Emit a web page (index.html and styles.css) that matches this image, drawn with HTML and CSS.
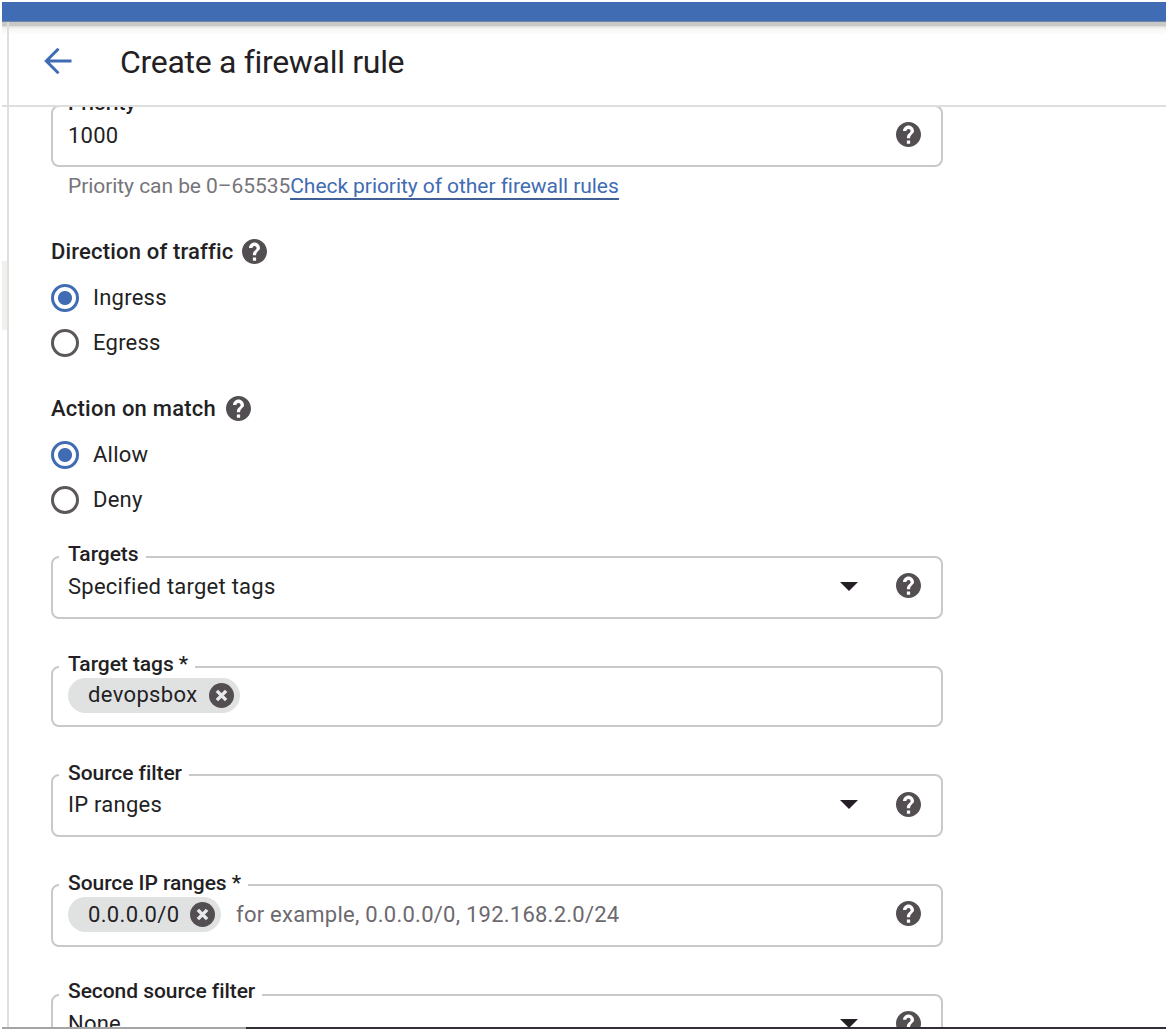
FILE: index.html
```html
<!DOCTYPE html>
<html lang="en">
<head>
<meta charset="utf-8">
<title>Create a firewall rule</title>
<link rel="stylesheet" href="styles.css">
</head>
<body>
<svg class="defs" width="0" height="0" aria-hidden="true">
  <symbol id="help" viewBox="2 2 20 20"><path d="M12 2C6.48 2 2 6.48 2 12s4.48 10 10 10 10-4.48 10-10S17.52 2 12 2zm1.300 17.300h-2.600v-2.500h2.600v2.500zm2-8.050-.9.92c-.72.73-1.1 1.33-1.1 2.83h-2.600v-.5c0-1.1.45-2.1 1.17-2.83l1.340-1.360c.33-.33.49-.76.49-1.210 0-.9-.8-1.600-1.700-1.600s-1.700.7-1.700 1.600H7.600C7.600 6.700 9.600 4.700 12 4.700s4.400 2 4.400 4.400c0 .88-.43 1.48-1.100 2.150z"/></symbol>
  <symbol id="cancel" viewBox="2 2 20 20"><circle cx="12" cy="12" r="10"/><path class="cross" d="M8.300 8.300l7.400 7.400M15.700 8.300l-7.400 7.400"/></symbol>
</svg>
<div class="window">
  <div class="topbar"></div>
  <div class="workspace">
    <aside class="rail"><div class="rail-item"></div></aside>
    <div class="panel">
      <header class="header">
        <svg class="back" viewBox="0 0 28 28"><path d="M27.500 14H3M14.500 1.800L2.300 14l12.200 12.200"/></svg>
        <h1 class="title">Create a firewall rule</h1>
      </header>
      <main class="form">
        <fieldset class="field">
          <legend class="label">Priority</legend>
          <div class="row"><span>1000</span><svg class="icon end"><use href="#help"/></svg></div>
        </fieldset>
        <p class="hint"><span>Priority can be 0–65535</span><a class="link">Check priority of other firewall rules</a></p>

        <section class="group">
          <h2 class="group-title direction">Direction of traffic<svg class="icon"><use href="#help"/></svg></h2>
          <div class="option"><span class="radio on"></span>Ingress</div>
          <div class="option"><span class="radio"></span>Egress</div>
        </section>
        <section class="group">
          <h2 class="group-title">Action on match<svg class="icon"><use href="#help"/></svg></h2>
          <div class="option"><span class="radio on"></span>Allow</div>
          <div class="option"><span class="radio"></span>Deny</div>
        </section>

        <fieldset class="field">
          <legend class="label">Targets</legend>
          <div class="row"><span>Specified target tags</span><span class="caret"></span><svg class="icon"><use href="#help"/></svg></div>
        </fieldset>
        <fieldset class="field tags">
          <legend class="label">Target tags *</legend>
          <div class="row"><span class="chip">devopsbox<svg class="icon"><use href="#cancel"/></svg></span></div>
        </fieldset>
        <fieldset class="field filter">
          <legend class="label">Source filter</legend>
          <div class="row"><span>IP ranges</span><span class="caret"></span><svg class="icon"><use href="#help"/></svg></div>
        </fieldset>
        <fieldset class="field ranges">
          <legend class="label">Source IP ranges *</legend>
          <div class="row"><span class="chip">0.0.0.0/0<svg class="icon"><use href="#cancel"/></svg></span><span class="placeholder">for example, 0.0.0.0/0, 192.168.2.0/24</span><svg class="icon end"><use href="#help"/></svg></div>
        </fieldset>
        <fieldset class="field second">
          <legend class="label">Second source filter</legend>
          <div class="row"><span>None</span><span class="caret"></span><svg class="icon"><use href="#help"/></svg></div>
        </fieldset>
      </main>
    </div>
  </div>
  <div class="baseline"></div>
</div>
</body>
</html>
```
FILE: styles.css
```css
* { box-sizing: border-box; }
body {
  margin: 0;
  background: #fff;
  color: #231f24;
  font: 22px/28px Roboto, sans-serif;
  letter-spacing: 0.240px;
  overflow: hidden;
}
.defs { display: block; }
.window {
  display: flex;
  flex-direction: column;
  height: 1032px;
  padding: 2px 4px 3px 2px;
}
.topbar {
  flex: none;
  height: 20px;
  background: #3f6cb3;
  border-bottom: 1px solid #7185a5;
}
.workspace {
  display: flex;
  flex: 1;
  min-height: 0;
  background: linear-gradient(#c8c8c8 0 4px, #e2e2df 4px 5px, #f3f3f1 6px, #fff 13px);
}
.rail { width: 7px; border-right: 2px solid #dfdfdd; }
.rail-item { height: 69px; margin-top: 239px; background: #f0f0ee; }
.panel { flex: 1; display: flex; flex-direction: column; min-width: 0; }
.header {
  display: flex;
  align-items: center;
  flex: none;
  height: 85px;
  margin-left: -7px;
  padding: 0 0 5px 42px;
  border-bottom: 2px solid #dededc;
}
.back { width: 28px; height: 28px; fill: none; stroke: #3f6cb3; stroke-width: 3; }
.title {
  margin: 1px 0 0 48px;
  font-size: 32px;
  font-weight: 400;
  line-height: 40px;
  letter-spacing: -0.310px;
}
.form { flex: 1; min-height: 0; overflow: hidden; padding-left: 42px; }
.field {
  width: 892px;
  height: 76px;
  min-width: 0;
  margin: 0;
  padding: 0 20px 0 6px;
  border: 2px solid #c9c9c9;
  border-radius: 8px;
}
.field:first-child { height: 75px; margin-top: -15px; }
.label {
  height: 28px;
  padding: 0 7px 0 9px;
  font-size: 21px;
  font-weight: 500;
  line-height: 22px;
  letter-spacing: -0.060px;
}
.filter .label, .ranges .label { line-height: 24px; }
.second .label { line-height: 20px; }
.row { display: flex; align-items: center; height: 31px; padding-left: 9px; }
.second .row { height: 29px; }
.icon { flex: none; width: 25px; height: 25px; fill: #534e51; }
.row > .icon { margin-bottom: 2px; }
.filter .row > .icon, .second .row > .icon { margin-bottom: 0; }
.cross { fill: none; stroke: #e8eaea; stroke-width: 2.800; }
.end { margin-left: auto; }
.caret {
  margin: 0 38px 0 auto;
  border: solid transparent;
  border-width: 9px 9px 0;
  border-top-color: #231f24;
}
.chip {
  display: flex;
  align-items: center;
  justify-content: space-between;
  height: 35px;
  padding: 0 6px 0 20px;
  border-radius: 18px;
  background: #e0e2e2;
}
.tags .chip { width: 172px; letter-spacing: 0.350px; }
.ranges .chip { width: 153px; letter-spacing: 0.350px; }
.placeholder { margin-left: 15px; color: #6c696f; }
.hint {
  margin: 5px 0 36px 17px;
  color: #77747a;
  font-size: 21px;
  letter-spacing: -0.060px;
}
.link { color: #3f6cb3; border-bottom: 2px solid #3f5f96; }
.group { margin-bottom: 27px; }
.group:last-of-type { margin-bottom: 20px; }
.group-title {
  display: flex;
  align-items: center;
  gap: 10px;
  margin: 0 0 7px;
  font-size: 22px;
  font-weight: 500;
  line-height: 32px;
}
.group-title.direction { gap: 9px; letter-spacing: 0.180px; }
.group-title .icon { margin-bottom: 2px; }
.option { display: flex; align-items: center; gap: 14px; height: 45.5px; }
.radio {
  width: 28px;
  height: 28px;
  border: 3px solid #5c575a;
  border-radius: 50%;
}
.radio.on {
  border-color: #3f6cb3;
  background: radial-gradient(circle, #3f6cb3 6.500px, #fff 7.500px);
}
.tags { height: 74px; margin-top: 34px; }
.tags .row { height: 28px; }
.filter, .ranges, .second { margin-top: 34px; }
.baseline {
  flex: none;
  height: 2px;
  background: linear-gradient(90deg, #a5a5a5 244px, #332d36 244px);
}
```
